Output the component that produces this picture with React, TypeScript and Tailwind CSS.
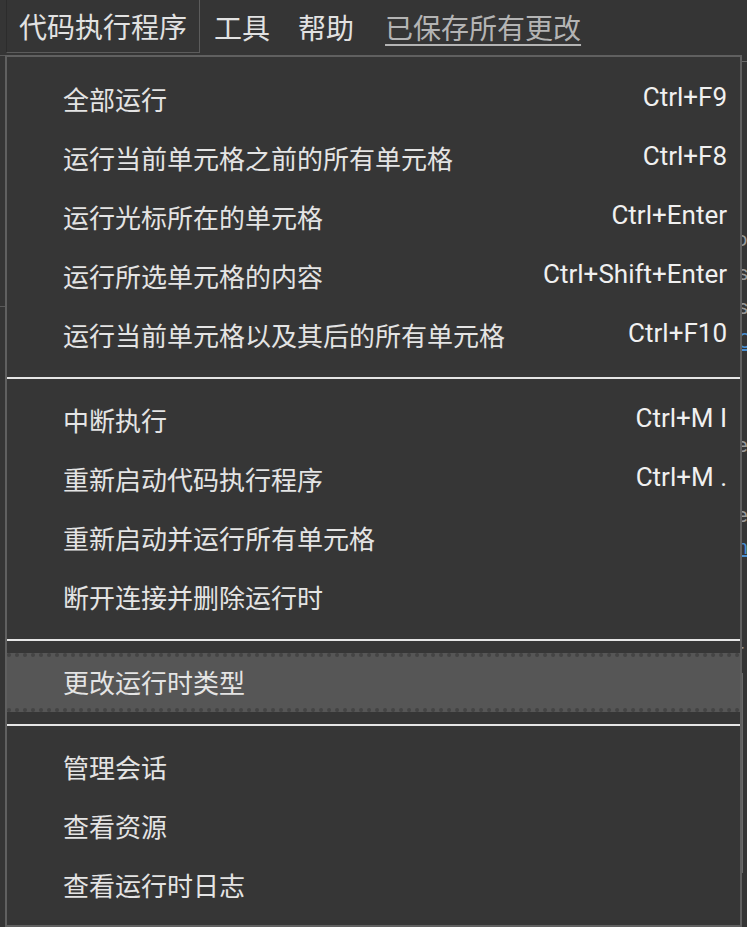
import React from 'react';

type Item = { label: string; shortcut?: string; active?: boolean };

const groups: Item[][] = [
    [
        { label: '全部运行', shortcut: 'Ctrl+F9' },
        { label: '运行当前单元格之前的所有单元格', shortcut: 'Ctrl+F8' },
        { label: '运行光标所在的单元格', shortcut: 'Ctrl+Enter' },
        { label: '运行所选单元格的内容', shortcut: 'Ctrl+Shift+Enter' },
        { label: '运行当前单元格以及其后的所有单元格', shortcut: 'Ctrl+F10' },
    ],
    [
        { label: '中断执行', shortcut: 'Ctrl+M I' },
        { label: '重新启动代码执行程序', shortcut: 'Ctrl+M .' },
        { label: '重新启动并运行所有单元格' },
        { label: '断开连接并删除运行时' },
    ],
    [{ label: '更改运行时类型', active: true }],
    [{ label: '管理会话' }, { label: '查看资源' }, { label: '查看运行时日志' }],
];

const cjk = "font-['Noto_Sans_CJK_SC','Noto_Sans',sans-serif]";

const MenuRow = ({ item }: { item: Item }) => (
    <div
        className={`flex h-[59px] items-center justify-between pl-[56px] pr-[13px] ${
            item.active ? 'bg-[#565656] border-y-4 border-dotted border-[#444444]' : ''
        }`}
    >
        <span className={`${cjk} text-[26px] leading-none text-[#e4e4e4] -mt-[1px]`}>{item.label}</span>
        {item.shortcut && (
            <span className="font-['Roboto','Liberation_Sans',sans-serif] text-[26px] leading-none text-[#f0f0f0] pb-[6px] whitespace-pre">
                {item.shortcut}
            </span>
        )}
    </div>
);

export default function App() {
    return (
        <div className="w-[747px] h-[927px] overflow-hidden bg-[#353535] flex flex-col">
            {/* Menu bar */}
            <div className={`${cjk} flex h-[55px] shrink-0 items-start`}>
                <div className="ml-[6px] w-[194px] h-[53px] border-l border-l-[#2c2c2c] border-r border-b border-[#5c5c5c] flex items-center pl-[12px]">
                    <span className="text-[28px] leading-none text-[#e2e2e2]">代码执行程序</span>
                </div>
                <div className="h-[53px] flex items-center">
                    <span className="px-[14px] text-[28px] leading-none text-[#e2e2e2]">工具</span>
                    <span className="px-[14px] text-[28px] leading-none text-[#e2e2e2]">帮助</span>
                    <span className="ml-[17px] text-[28px] leading-none text-[#b4b4b4] underline underline-offset-[5px] decoration-2">
                        已保存所有更改
                    </span>
                </div>
            </div>

            <div className="flex flex-1">
                {/* left sliver of the page under the menu */}
                <div className="w-[5px] shrink-0 overflow-hidden flex flex-col">
                    <div className="h-px bg-[#5a5a5a]" />
                    <div className="h-[30px]" />
                    <div className="text-[#dcdcdc] text-[22px] leading-[28px] font-['Roboto',sans-serif] -ml-[8px]">‹</div>
                    <div className="h-[192px]" />
                    <div className="h-px bg-[#5a5a5a]" />
                </div>

                {/* Dropdown menu */}
                <div className="w-[737px] shrink-0 border-2 border-[#606060] bg-[#363636] pt-[13px] pb-[10px]">
                    {groups.map((group, gi) => (
                        <div key={gi}>
                            {gi > 0 && <div className="my-[12px] h-[2px] bg-[#e6e6e6]" />}
                            {group.map((item) => (
                                <MenuRow key={item.label} item={item} />
                            ))}
                        </div>
                    ))}
                </div>

                {/* right sliver of the page */}
                <div className="w-[5px] shrink-0 overflow-hidden flex flex-col font-['Roboto',sans-serif] text-[20px] leading-[24px] text-[#9a9a9a]">
                    <div className="h-[6px]" />
                    <div className="h-px bg-[#6a6a6a]" />
                    <div className="h-[62px]" />
                    <div className="-ml-[6px]">‹</div>
                    <div className="-ml-[6px]">‹</div>
                    <div className="h-[55px]" />
                    <div className="-ml-[6px]">o</div>
                    <div className="h-[10px]" />
                    <div className="-ml-[4px]">s</div>
                    <div className="h-[10px]" />
                    <div className="-ml-[4px]">s</div>
                    <div className="h-[10px]" />
                    <div className="-ml-[4px] text-[#4a8fd0] underline">C</div>
                    <div className="h-[80px]" />
                    <div className="-ml-[5px]">e</div>
                    <div className="h-[46px]" />
                    <div className="-ml-[5px]">e</div>
                    <div className="h-[8px]" />
                    <div className="-ml-[5px] text-[#4a8fd0] underline">n</div>
                    <div className="h-[80px]" />
                    <div className="-ml-[5px]">r</div>
                    <div className="h-[10px]" />
                    <div className="h-[200px] w-px bg-[#6a6a6a]" />
                </div>
            </div>
        </div>
    );
}
